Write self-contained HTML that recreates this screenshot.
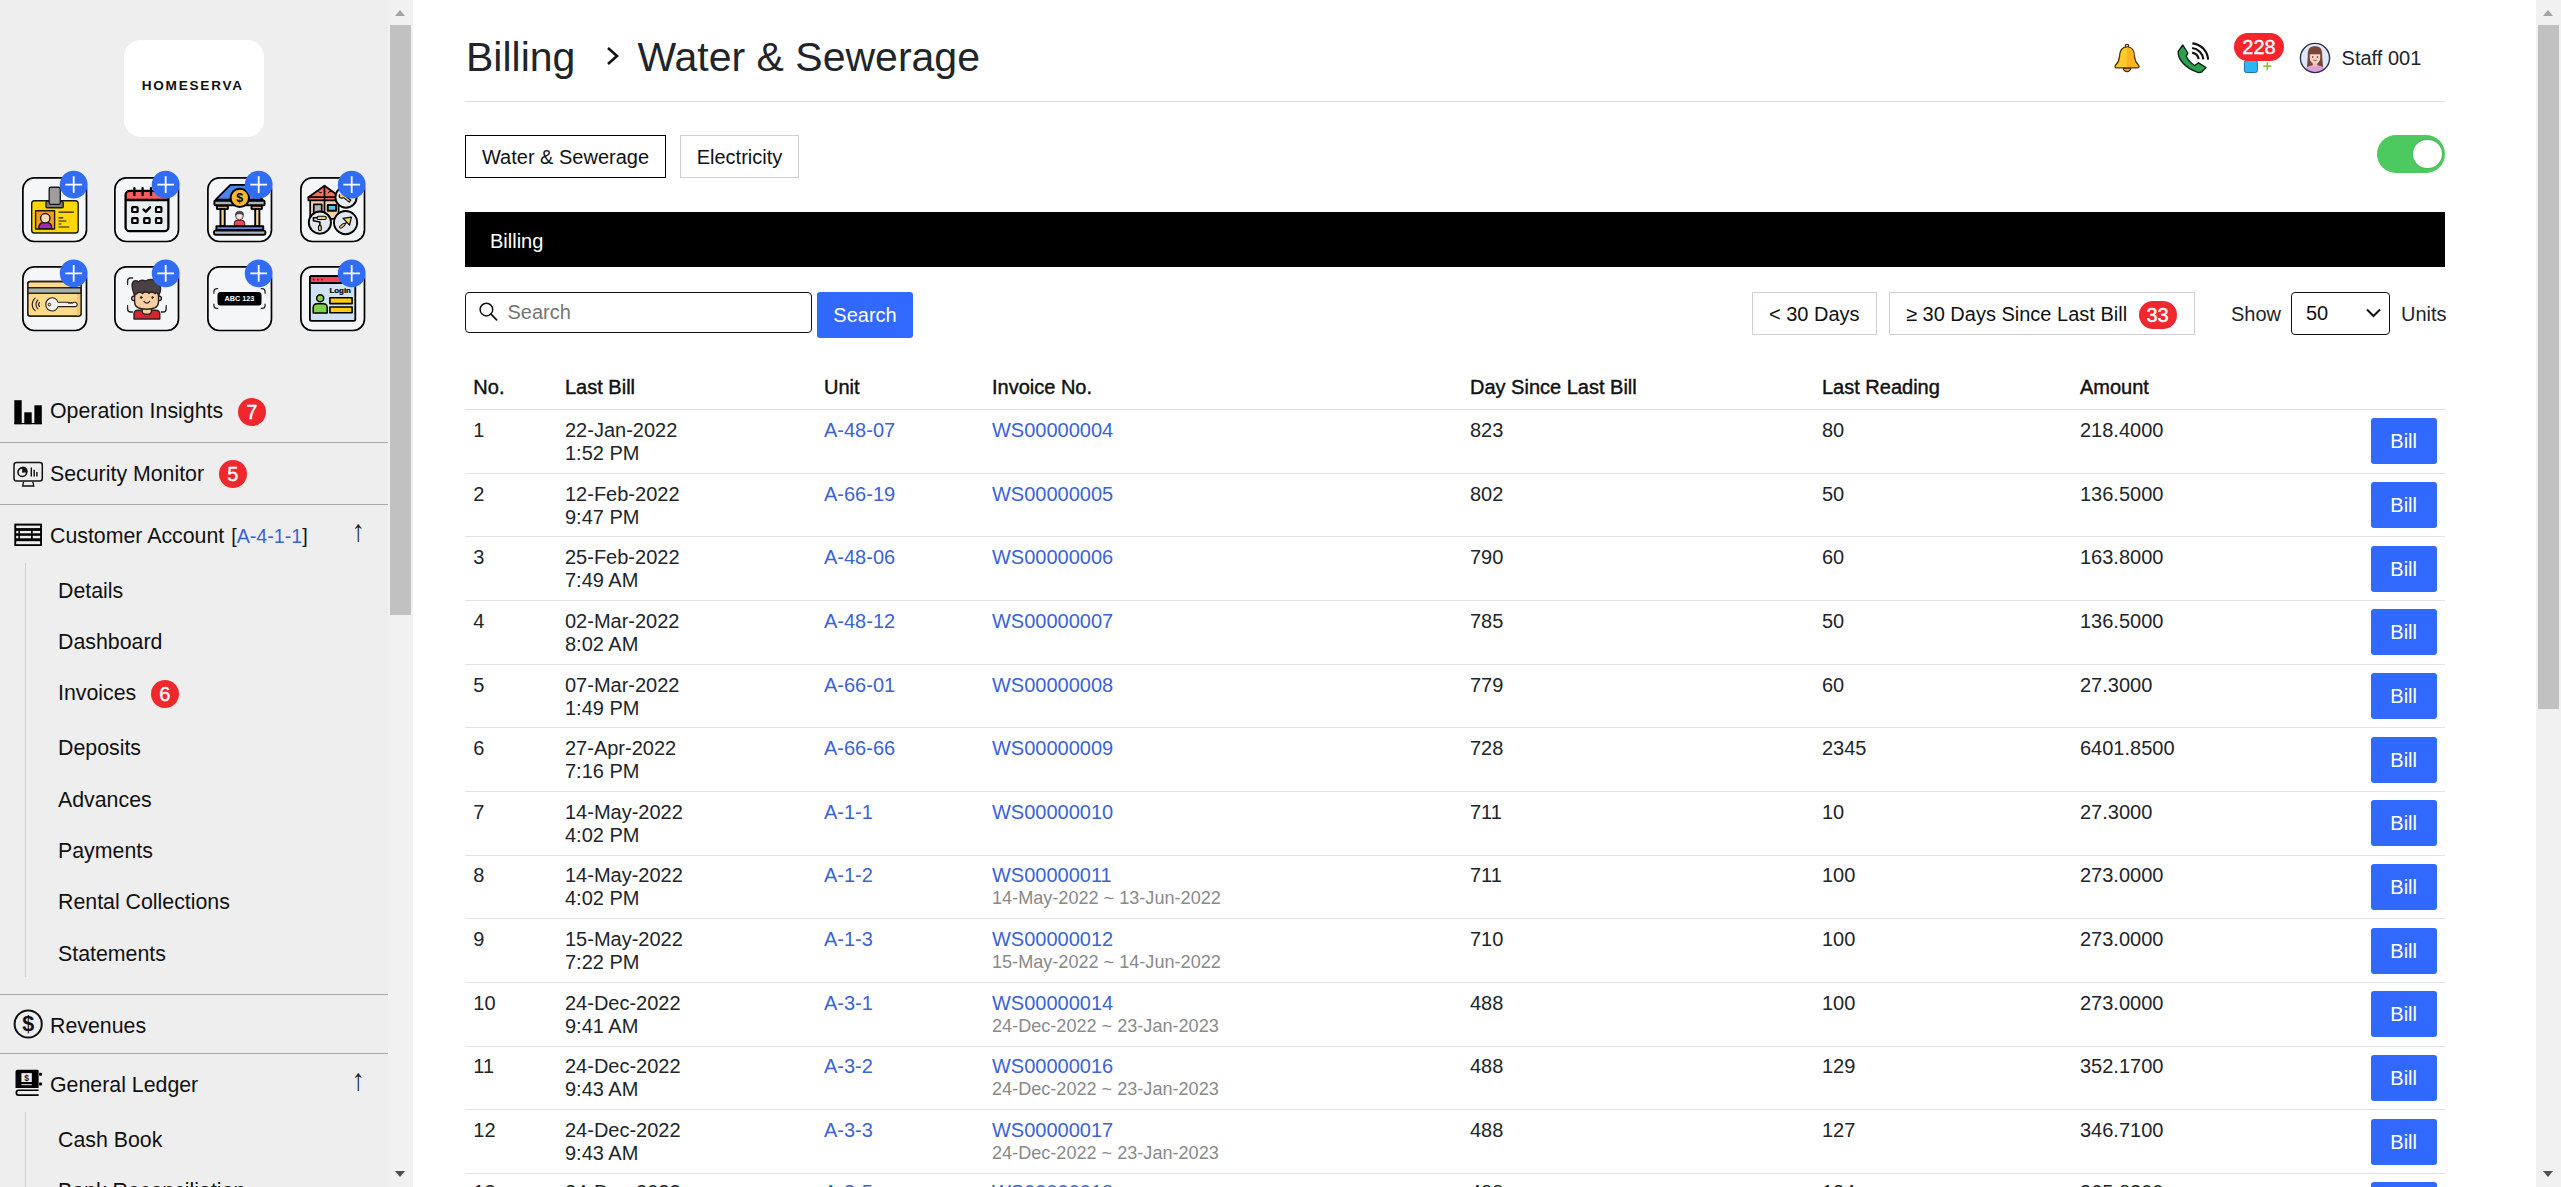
<!DOCTYPE html>
<html lang="en">
<head>
<meta charset="utf-8">
<title>Billing - Water &amp; Sewerage</title>
<style>
*{box-sizing:border-box;}
html,body{margin:0;padding:0;}
body{width:2561px;height:1187px;overflow:hidden;position:relative;background:#fff;
  font-family:"Liberation Sans",Arial,Helvetica,sans-serif;font-size:20px;line-height:23px;color:#212529;}
a{color:#3b63d6;text-decoration:none;}
/* ---------- sidebar ---------- */
#side{position:absolute;left:0;top:0;width:388px;height:1187px;background:#eeeeee;overflow:hidden;color:#111;font-size:21.33px;}
#logo{position:absolute;left:124px;top:40px;width:140px;height:97px;background:#fff;border-radius:17px;}
#logo svg{position:absolute;left:0;top:0;}
.tile{position:absolute;width:65.4px;height:65.4px;overflow:visible;}
.mi{position:absolute;left:0;width:388px;height:30px;}
.mi .t{position:absolute;left:50px;top:1.5px;white-space:nowrap;line-height:25px;}

.sep{position:absolute;left:0;width:388px;height:1px;background:#a9a9a9;}
.sub{position:absolute;left:58px;white-space:nowrap;line-height:25px;}
.vline{position:absolute;left:25px;width:1px;background:#cfcfcf;}
.badge{position:absolute;width:27.5px;height:27.5px;border-radius:14px;background:#f0282d;color:#fff;font-size:20px;line-height:28px;text-align:center;-webkit-text-stroke:0.4px #fff;}
.arr{position:absolute;left:351.5px;font-size:27px;line-height:22px;color:#222;transform:scaleY(1.13);transform-origin:50% 100%;}
/* ---------- scrollbars ---------- */
.sb{position:absolute;top:0;width:25px;height:1187px;background:#f1f1f1;}
.sb .th{position:absolute;left:2px;width:21px;top:25px;background:#c1c1c1;}
.sb .up{position:absolute;left:7px;top:10px;width:0;height:0;border-left:5.5px solid transparent;border-right:5.5px solid transparent;border-bottom:6px solid #a3a3a3;}
.sb .dn{position:absolute;left:7px;top:1171px;width:0;height:0;border-left:5.5px solid transparent;border-right:5.5px solid transparent;border-top:6px solid #505050;}
/* ---------- main ---------- */
#main{position:absolute;left:413px;top:0;width:2123px;height:1187px;overflow:hidden;}
#title{position:absolute;left:53px;top:34px;font-size:41px;line-height:46px;white-space:nowrap;color:#212529;}
#hr{position:absolute;left:52px;top:101px;width:1980px;height:1px;background:#dcdcdc;}
.tab{position:absolute;top:135px;height:43px;border:1.67px solid #d0d0d0;line-height:42px;text-align:center;color:#111;white-space:nowrap;background:#fff;}
#bar{position:absolute;left:52px;top:212px;width:1980px;height:55px;background:#000;color:#fff;line-height:58px;padding-left:25px;}
#search{position:absolute;left:52px;top:292px;width:347px;height:41px;border:1.67px solid #111;border-radius:4px;}
#search span{position:absolute;left:41.5px;top:8.3px;color:#757575;}
#sbtn{position:absolute;left:404px;top:292px;width:96px;height:46px;background:#3168fe;border-radius:3px;color:#fff;text-align:center;line-height:46px;}
.fbtn{position:absolute;top:292px;height:43px;border:1.67px solid #d0d0d0;line-height:42px;color:#111;white-space:nowrap;}
#tbl{position:absolute;left:52px;top:365.4px;width:1980px;border-collapse:collapse;table-layout:fixed;}
#tbl th{font-weight:normal;text-align:left;color:#111;-webkit-text-stroke:0.42px #111;padding:11px 8.33px 9.67px;border-bottom:1px solid #dcdfe2;line-height:23px;white-space:nowrap;}
#tbl td{padding:8.83px 8.33px 7.83px;border-bottom:1px solid #e0e2e5;vertical-align:top;line-height:23px;height:63.67px;white-space:nowrap;}
#tbl td small{display:block;font-size:18.1px;line-height:21px;color:#8a8a8a;margin-top:1px;}
.bill{display:block;width:66px;height:46px;background:#3168fe;color:#fff;border-radius:3px;text-align:center;line-height:46px;margin-top:-0.5px;}
#tbl tr:last-child td{padding-top:7.3px;}
#tbl tr:last-child .bill{margin-top:1px;}
</style>
</head>
<body>
<div id="side">
  <div id="logo"><svg width="140" height="97" viewBox="0 0 140 97"><text x="17.7" y="50.1" font-family="Liberation Sans, sans-serif" font-weight="bold" font-size="13.6" textLength="100.4" lengthAdjust="spacing" fill="#111">HOMESERVA</text></svg></div>
  <!--TILES_S-->
  <svg class="tile" style="left:22.2px;top:176.8px" viewBox="0 0 65.4 65.4"><rect x="0.9" y="0.9" width="63.6" height="63.6" rx="11.4" fill="#f5f6f8" stroke="#000" stroke-width="1.7"/><g stroke="#1a1a1a" stroke-width="1.4" stroke-linejoin="round">
<rect x="9.7" y="23.8" width="46.5" height="32.2" rx="2.8" fill="#ffd60a"/>
<rect x="24" y="24.4" width="17.2" height="6.3" rx="1.2" fill="#7c7c7c"/>
<rect x="27.2" y="10.2" width="11.1" height="17.2" rx="1.6" fill="#9d9d9d"/>
<rect x="13.6" y="33.8" width="19" height="18.2" fill="#ff9a1e"/>
<path d="M16.6 51.6 C16.6 47.2 19.4 45.2 23.3 45.2 C27.2 45.2 30 47.2 30 51.6 Z" fill="#a42bb5"/>
<circle cx="23.3" cy="41.2" r="4.7" fill="#fbdcb5"/>
</g>
<path d="M36.5 35.2 H51.9 M36.5 40.8 H41.2 M36.5 44 H44.4 M36.5 47 H39.4 M36.5 50 H47.3" stroke="#1a1a1a" stroke-width="1.2" fill="none"/><circle cx="51.7" cy="7.7" r="13.9" fill="#316cf4"/><path d="M43.3 7.7 H60.1 M51.7 -0.7 V16.1" stroke="#fff" stroke-width="1.8" fill="none"/></svg>
  <svg class="tile" style="left:114.0px;top:176.8px" viewBox="0 0 65.4 65.4"><rect x="0.9" y="0.9" width="63.6" height="63.6" rx="11.4" fill="#f5f6f8" stroke="#000" stroke-width="1.7"/><rect x="11.6" y="13.8" width="42.8" height="40.4" rx="4" fill="#e9eeee"/>
<path d="M11.6 23 V17.8 Q11.6 13.8 15.6 13.8 H50.4 Q54.4 13.8 54.4 17.8 V23 Z" fill="#f95c5c"/>
<g fill="none" stroke="#000" stroke-width="2.3" stroke-linecap="round" stroke-linejoin="round">
<rect x="11.6" y="13.8" width="42.8" height="40.4" rx="4"/>
<path d="M11.6 23 H54.4" stroke-linecap="butt"/>
<path d="M20.4 11.2 V18.2 M28.6 11.2 V18.2 M37 11.2 V18.2 M45.3 11.2 V18.2"/>
<g fill="#fff" stroke-width="2.2"><rect x="18.2" y="30.2" width="5.4" height="4.8" rx="0.6"/><rect x="42" y="30.2" width="5.4" height="4.8" rx="0.6"/><rect x="18.2" y="41.2" width="5.4" height="4.8" rx="0.6"/><rect x="30.2" y="41.2" width="5.4" height="4.8" rx="0.6"/><rect x="42" y="41.2" width="5.4" height="4.8" rx="0.6"/></g>
<path d="M29.6 32.6 L31.9 34.7 L36 30.4" stroke-width="2.4"/>
</g><circle cx="51.7" cy="7.7" r="13.9" fill="#316cf4"/><path d="M43.3 7.7 H60.1 M51.7 -0.7 V16.1" stroke="#fff" stroke-width="1.8" fill="none"/></svg>
  <svg class="tile" style="left:207.1px;top:176.8px" viewBox="0 0 65.4 65.4"><rect x="0.9" y="0.9" width="63.6" height="63.6" rx="11.4" fill="#f5f6f8" stroke="#000" stroke-width="1.7"/><g stroke="#000" stroke-width="1.9" stroke-linejoin="round">
<path d="M8.7 22.6 L23.4 7.9 H42.7 L55.6 22.6 Z" fill="#4a86e8"/>
<rect x="7.4" y="23.8" width="50.2" height="4.4" rx="0.8" fill="#aab6bb"/>
<rect x="9.9" y="28.9" width="11" height="3.2" rx="0.6" fill="#f5a83a"/>
<rect x="44.5" y="28.9" width="10.4" height="3.2" rx="0.6" fill="#f5a83a"/>
<rect x="13.5" y="32.1" width="4.2" height="16.8" fill="#f9d79b"/>
<rect x="48.2" y="32.1" width="4.2" height="16.8" fill="#f9d79b"/>
<path d="M27.2 48.9 V46.6 Q27.2 43.1 30.7 43.1 H34.3 Q37.8 43.1 37.8 46.6 V48.9 Z" fill="#e8475a" stroke-width="0.8"/>
<circle cx="32.5" cy="39" r="3.8" fill="#fde3da" stroke-width="0.9" stroke="#333"/>
<path d="M28.5 38.2 Q28.3 34.2 32.5 34.2 Q36.9 34.2 36.5 38.2 Q34.5 36.6 32.5 36.8 Q30.4 36.6 28.5 38.2 Z" fill="#444" stroke="#333" stroke-width="0.6"/>
<rect x="9.4" y="49.3" width="46.9" height="3.6" fill="#5c8fe0"/>
<rect x="7" y="53.6" width="51.4" height="4.1" rx="1.4" fill="#aab6bb"/>
<circle cx="32.8" cy="20.9" r="9.2" fill="#f7b733" stroke-width="2"/>
</g>
<text x="32.8" y="25.1" text-anchor="middle" font-family="Liberation Sans, sans-serif" font-weight="bold" font-size="12.4" fill="#000">$</text><circle cx="51.7" cy="7.7" r="13.9" fill="#316cf4"/><path d="M43.3 7.7 H60.1 M51.7 -0.7 V16.1" stroke="#fff" stroke-width="1.8" fill="none"/></svg>
  <svg class="tile" style="left:300.2px;top:176.8px" viewBox="0 0 65.4 65.4"><rect x="0.9" y="0.9" width="63.6" height="63.6" rx="11.4" fill="#f5f6f8" stroke="#000" stroke-width="1.7"/><g stroke="#000" stroke-width="1.7" stroke-linejoin="round" stroke-linecap="round">
<rect x="10.2" y="23" width="28.4" height="18.8" fill="#f5cfae"/>
<path d="M8.4 20.2 L24.5 8.7 L40.6 20.2 V23.4 H8.4 Z" fill="#f2705f"/>
<path d="M8.4 20.2 H40.6 M24.5 9 V41.5" fill="none"/>
<path d="M18.6 14.6 q1 1.6 2.8 1.2 M28.4 15.8 q0.4 -1.8 2.2 -1.6" fill="none" stroke-width="1"/>
<rect x="13.8" y="27.4" width="7.9" height="10" fill="#b0b8c4"/>
<rect x="27.8" y="28" width="8.2" height="5.8" fill="#4fc8f0" stroke-width="1.9"/>
<circle cx="46" cy="20.2" r="10.6" fill="#e8ebf2" stroke-width="1.9"/>
<path d="M39.4 17.6 q-1 2.6 1.6 3.4 q1.6 0.4 2.6 -0.4 l5.6 4.6 l1.6 -2 l-5.6 -4.4 q0.4 -1.4 -0.6 -2.6" fill="#f3d35b" stroke-width="1.1"/>
<circle cx="19.9" cy="45.6" r="11.1" fill="#e3e7ef" stroke-width="1.9"/>
<circle cx="45.6" cy="45.6" r="11.6" fill="#e3e7ef" stroke-width="1.9"/>
<rect x="17" y="39.2" width="9.2" height="3.3" rx="1.5" fill="#f3d35b" stroke-width="1.1"/>
<path d="M17 40.8 H13.4 V43.8 L19.9 45 V48.6" fill="none" stroke-width="1.5"/>
<rect x="18.5" y="48.4" width="2.8" height="5.2" rx="1.4" fill="#f3d35b" stroke-width="1.1"/>
<path d="M43.1 41.3 L51.4 40.1 L49.6 48.1 Z" fill="#f3d35b" stroke-width="1.2"/>
<path d="M46.2 45.8 L44 47.5" fill="none" stroke-width="1.4"/>
<path d="M43.8 47.7 L40.8 50" fill="none" stroke-width="3.4"/>
<path d="M43.8 47.7 L40.8 50" fill="none" stroke="#e8b96a" stroke-width="1.6"/>
</g><circle cx="51.7" cy="7.7" r="13.9" fill="#316cf4"/><path d="M43.3 7.7 H60.1 M51.7 -0.7 V16.1" stroke="#fff" stroke-width="1.8" fill="none"/></svg>
  <svg class="tile" style="left:22.2px;top:266.0px" viewBox="0 0 65.4 65.4"><rect x="0.9" y="0.9" width="63.6" height="63.6" rx="11.4" fill="#f5f6f8" stroke="#000" stroke-width="1.7"/><g stroke="#2a2118" stroke-width="1.4" stroke-linejoin="round">
<rect x="5.7" y="15.5" width="53.4" height="34.7" rx="2.6" fill="#fdd98a"/>
<path d="M55 15.6 H56.5 Q59.1 15.6 59.1 18.1 V47.6 Q59.1 50.1 56.5 50.1 H55 Z" fill="#f0c674" stroke="none"/>
<rect x="5.7" y="21.8" width="53.4" height="5.4" fill="#a9b1b1"/>
<rect x="5.7" y="15.5" width="53.4" height="34.7" rx="2.6" fill="none"/>
<path d="M36 36.3 L46 36.3 l0.8 0.9 l0.9 -0.7 l0.9 0.7 l0.9 -0.7 l0.9 0.7 l0.9 -0.9 H53.5 Q55.2 37.2 55.2 38.6 Q55.2 40.6 53.5 40.6 H36 C35 43 33 45 30.3 45 C26.5 45 23.8 42 23.8 38.4 C23.8 34.8 26.5 31.8 30.3 31.8 C33 31.8 35 33.8 36 36.3 Z" fill="#eef0f2" stroke-width="1.1"/>
<circle cx="27.4" cy="38.6" r="1.3" fill="#fdd98a" stroke-width="1"/>
<path d="M13.1 32.2 A8.1 8.1 0 0 0 13.1 44.6 M15.9 34.0 A6 6 0 0 0 15.9 42.8 M17.5 36.3 A3 3 0 0 0 17.5 40.5" fill="none" stroke-width="1.1" stroke-linecap="round"/>
</g><circle cx="51.7" cy="7.4" r="13.9" fill="#316cf4"/><path d="M43.3 7.4 H60.1 M51.7 -1.0 V15.8" stroke="#fff" stroke-width="1.8" fill="none"/></svg>
  <svg class="tile" style="left:114.0px;top:266.0px" viewBox="0 0 65.4 65.4"><rect x="0.9" y="0.9" width="63.6" height="63.6" rx="11.4" fill="#f5f6f8" stroke="#000" stroke-width="1.7"/><g stroke="#2b2326" stroke-width="1.4" stroke-linejoin="round" stroke-linecap="round">
<path d="M13.6 18.6 V15 Q13.6 12 16.6 12 H18.6 M13.6 39.6 V43 Q13.6 46 16.6 46 H18.6 M52.2 39.6 V43 Q52.2 46 49.2 46 H47.2" fill="none" stroke-width="1.3"/>
<circle cx="19.8" cy="32.4" r="2.1" fill="#f7cfa1"/><circle cx="45.3" cy="32.4" r="2.1" fill="#f7cfa1"/>
<path d="M20 53 V48.2 Q20 44.2 24 44.2 H41.8 Q45.8 44.2 45.8 48.2 V53 Z" fill="#d9232e"/>
<path d="M28.2 42 V45 Q28.2 48.3 32.8 48.3 Q37.5 48.3 37.5 45 V42 Z" fill="#f7cfa1"/>
<path d="M20.6 26 H44.5 V36 Q44.5 43.2 32.5 43.2 Q20.6 43.2 20.6 36 Z" fill="#f7cfa1"/>
<path d="M20.6 30 C19 24 16.8 20 18.6 16.6 C20 14 23 14.6 24.4 16 C26.5 13.6 30 14.4 31.6 15 C35 12.6 42 13 44.6 17.4 C47.4 20 47 25 44.6 30 C44.4 27 43 26 41 27.6 C39 25.6 36.6 25.4 35 27.4 C33 25 30 25.2 28.6 27.6 C26.4 25.4 23.4 26 22.6 28 C21.4 27.6 20.8 28.6 20.6 30 Z" fill="#4a4144"/>
<circle cx="27.2" cy="31.5" r="0.9" fill="#2b2326" stroke-width="0.8"/><circle cx="38.6" cy="31.5" r="0.9" fill="#2b2326" stroke-width="0.8"/>
<path d="M30 35.4 Q32.8 39 35.7 35.4" fill="none" stroke-width="1.3"/>
</g><circle cx="51.7" cy="7.4" r="13.9" fill="#316cf4"/><path d="M43.3 7.4 H60.1 M51.7 -1.0 V15.8" stroke="#fff" stroke-width="1.8" fill="none"/></svg>
  <svg class="tile" style="left:207.1px;top:266.0px" viewBox="0 0 65.4 65.4"><rect x="0.9" y="0.9" width="63.6" height="63.6" rx="11.4" fill="#f5f6f8" stroke="#000" stroke-width="1.7"/><rect x="10.5" y="26" width="44" height="13.5" rx="3" fill="#000"/>
<text x="32.4" y="35.3" text-anchor="middle" font-family="Liberation Sans, sans-serif" font-weight="bold" font-size="7.2" fill="#fff" textLength="30" lengthAdjust="spacingAndGlyphs" xml:space="preserve">ABC 123</text>
<path d="M6.9 27.2 V25.7 Q6.9 22.7 9.9 22.7 H10.7 M58.1 27.2 V25.7 Q58.1 22.7 55.1 22.7 H54.3 M6.9 38.2 V39.5 Q6.9 42.4 9.9 42.4 H10.7 M58.1 38.2 V39.5 Q58.1 42.4 55.1 42.4 H54.3" fill="none" stroke="#222" stroke-width="1.2" stroke-linecap="round"/><circle cx="51.7" cy="7.4" r="13.9" fill="#316cf4"/><path d="M43.3 7.4 H60.1 M51.7 -1.0 V15.8" stroke="#fff" stroke-width="1.8" fill="none"/></svg>
  <svg class="tile" style="left:300.2px;top:266.0px" viewBox="0 0 65.4 65.4"><rect x="0.9" y="0.9" width="63.6" height="63.6" rx="11.4" fill="#f5f6f8" stroke="#000" stroke-width="1.7"/><g stroke="#000" stroke-width="1.8" stroke-linejoin="round">
<rect x="9.9" y="10.2" width="45.4" height="44.7" rx="1.6" fill="#cfe2f3"/>
<path d="M9.9 17 V11.8 Q9.9 10.2 11.5 10.2 H53.7 Q55.3 10.2 55.3 11.8 V17 Z" fill="#f4425f"/>
<rect x="29.9" y="31.8" width="22.2" height="5.8" fill="#ffcc14" stroke-width="1.6"/>
<rect x="29.9" y="41" width="22.2" height="5.8" fill="#ffcc14" stroke-width="1.6"/>
<path d="M13.2 47 V41.8 Q13.2 37.8 17.2 37.8 H23.2 Q27.2 37.8 27.2 41.8 V47 Z" fill="#7ed348" stroke-width="1.5"/>
<circle cx="20.2" cy="32.3" r="3.5" fill="#7ed348" stroke-width="1.5"/>
</g>
<circle cx="13.8" cy="13.5" r="0.9" fill="#7a0f22"/><circle cx="17.9" cy="13.5" r="0.9" fill="#7a0f22"/><circle cx="22" cy="13.5" r="0.9" fill="#7a0f22"/>
<text x="40.2" y="26.6" text-anchor="middle" font-family="Liberation Sans, sans-serif" font-weight="bold" font-size="7.8" fill="#000" stroke="#000" stroke-width="0.25" textLength="21.5" lengthAdjust="spacingAndGlyphs">Login</text><circle cx="51.7" cy="7.4" r="13.9" fill="#316cf4"/><path d="M43.3 7.4 H60.1 M51.7 -1.0 V15.8" stroke="#fff" stroke-width="1.8" fill="none"/></svg>
  <!--TILES_E-->
  <svg width="60" height="720" viewBox="0 390 60 720" style="position:absolute;left:0;top:390px">
    <g fill="#000">
      <rect x="14.3" y="400.2" width="7.4" height="24"/><rect x="24.3" y="412.3" width="7.4" height="11.9"/><rect x="34.4" y="405.3" width="7.4" height="18.9"/><rect x="14.3" y="423" width="27.5" height="1.2"/>
    </g>
    <g fill="none" stroke="#111" stroke-width="1.5">
      <rect x="14" y="462.4" width="28.3" height="18.6" rx="2.5"/>
      <path d="M23.6 481.6 L22.6 486 H33.8 L32.8 481.6" stroke-width="1.3"/>
      <circle cx="22.3" cy="472.2" r="4.3" stroke-width="1.6"/>
      <path d="M22.8 472 V467.2 A4.3 4.3 0 0 1 27.1 471.6 Z" stroke-width="1.2" fill="#111"/>
      <path d="M31.3 467.6 V476.4 M34.2 469.8 V476.4 M36.9 472 V476.4" stroke-width="1.4"/>
    </g>
    <rect x="14.3" y="523.6" width="27.7" height="22.4" fill="#000"/>
    <g fill="#eeeeee">
      <rect x="16.2" y="525.6" width="23.9" height="2.5"/>
      <rect x="16.2" y="530.9" width="2.2" height="2.4"/><rect x="19.9" y="530.9" width="11.1" height="2.4"/><rect x="32.7" y="530.9" width="7.4" height="2.4"/>
      <rect x="16.2" y="535.8" width="2.2" height="2.5"/><rect x="19.9" y="535.8" width="11.1" height="2.5"/><rect x="32.7" y="535.8" width="7.4" height="2.5"/>
      <rect x="16.2" y="541.2" width="23.9" height="3"/>
    </g>
    <circle cx="28.2" cy="1024" r="13.6" fill="none" stroke="#111" stroke-width="2"/>
    <text x="28.2" y="1031.3" text-anchor="middle" font-family="Liberation Sans, sans-serif" font-weight="bold" font-size="21.5" fill="#111">$</text>
    <path d="M17.5 1069.7 H37.4 Q38.6 1069.7 38.6 1071 V1087.9 H15.5 V1071.7 Q15.5 1069.7 17.5 1069.7 Z" fill="#000"/>
    <rect x="21.4" y="1073.1" width="10.4" height="8.9" fill="#eeeeee"/>
    <text x="26.6" y="1081" text-anchor="middle" font-family="Liberation Sans, sans-serif" font-weight="bold" font-size="8.5" fill="#111">$</text>
    <rect x="21.4" y="1084.2" width="10.4" height="1" fill="#eeeeee"/>
    <rect x="39" y="1072.8" width="3" height="3" rx="0.8" fill="#000"/><rect x="39" y="1082.6" width="3" height="3" rx="0.8" fill="#000"/>
    <path d="M38.6 1089.4 H18.5 Q15.5 1089.4 15.5 1092.7 Q15.5 1096 18.5 1096 H38.6 V1094.3 H18.5 Q17.3 1094.3 17.3 1092.7 Q17.3 1091.1 18.5 1091.1 H38.6 Z" fill="#000"/>
  </svg>
  <div class="mi" style="top:397px"><span class="t">Operation Insights</span><span class="badge" style="left:238px;top:1px">7</span></div>
  <div class="sep" style="top:442px"></div>
  <div class="mi" style="top:460px"><span class="t">Security Monitor</span><span class="badge" style="left:219px;top:0px">5</span></div>
  <div class="sep" style="top:504px"></div>
  <div class="mi" style="top:522px"><span class="t">Customer Account <span style="font-size:19.7px;margin-left:1px">[<a>A-4-1-1</a>]</span></span><span class="arr" style="top:-1px">&#8593;</span></div>
  <div class="vline" style="top:563px;height:414px"></div>
  <div class="sub" style="top:579px">Details</div>
  <div class="sub" style="top:630px">Dashboard</div>
  <div class="sub" style="top:681px">Invoices<span class="badge" style="left:93px;top:-1px">6</span></div>
  <div class="sub" style="top:736px">Deposits</div>
  <div class="sub" style="top:788px">Advances</div>
  <div class="sub" style="top:839px">Payments</div>
  <div class="sub" style="top:890px">Rental Collections</div>
  <div class="sub" style="top:942px">Statements</div>
  <div class="sep" style="top:994px"></div>
  <div class="mi" style="top:1012px"><span class="t">Revenues</span></div>
  <div class="sep" style="top:1053px"></div>
  <div class="mi" style="top:1071px"><span class="t">General Ledger</span><span class="arr" style="top:-1px">&#8593;</span></div>
  <div class="vline" style="top:1112px;height:80px"></div>
  <div class="sub" style="top:1128px">Cash Book</div>
  <div class="sub" style="top:1179px">Bank Reconciliation</div>
</div>
<div class="sb" style="left:388px"><div class="up"></div><div class="th" style="height:590px"></div><div class="dn"></div></div>
<div id="main">
  <div id="title">Billing<svg width="20" height="28" viewBox="0 0 20 28" style="margin:0 14px 0 28px;vertical-align:1px"><path d="M5 6 L14 14 L5 22" fill="none" stroke="#111" stroke-width="2.6"/></svg>Water &amp; Sewerage</div>
  <svg id="topic" width="240" height="56" viewBox="2103 28 240 56" style="position:absolute;left:1690px;top:28px">
    <g stroke="#4a3205" stroke-width="1.3" stroke-linejoin="round">
      <path d="M2123.3 68 a3.7 3.7 0 0 0 7.4 0 z" fill="#ff9d17"/>
      <circle cx="2127" cy="46" r="1.7" fill="#fff"/>
      <path d="M2127 46.8 C2120.5 46.8 2119.6 52 2119.4 57 C2119.2 61.5 2117.5 63.3 2115.5 65.3 C2114.5 66.4 2115 67.8 2116.4 67.8 L2137.6 67.8 C2139 67.8 2139.5 66.4 2138.5 65.3 C2136.5 63.3 2134.8 61.5 2134.6 57 C2134.4 52 2133.5 46.8 2127 46.8 Z" fill="#ffc928"/>
    </g>
    <path d="M2127 47.6 C2133 47.6 2133.7 52.5 2133.9 57 C2134.1 61.8 2135.9 63.8 2137.9 65.8 C2138.5 66.5 2138.3 67.1 2137.5 67.1 L2127 67.1 Z" fill="#ffb41f"/>
    <path d="M2182.8 45 L2178.2 51.5 C2177.5 58 2184 68 2198.5 72.6 L2201.6 72 L2206 67.5 L2198.5 62.8 L2194.7 65.5 C2191 63.5 2188 60 2186.2 56.3 L2187.8 53 Z" fill="#2f9e4f" stroke="#07240f" stroke-width="1.4" stroke-linejoin="round"/>
    <path d="M2192.3 43.3 A17.3 17.3 0 0 1 2208.1 59.6 M2192.1 48.0 A12.6 12.6 0 0 1 2203.4 59.4 M2192.2 52.6 A8.0 8.0 0 0 1 2198.7 59.1" fill="none" stroke="#111" stroke-width="2.2"/>
    <rect x="2244.4" y="60.5" width="13" height="12" rx="2" fill="#2bb5f5" stroke="#1a6fc4" stroke-width="1"/>
    <path d="M2263.3 66.2 H2271.3 M2267.3 62.2 V70.2" stroke="#8bc34a" stroke-width="1.8"/>
    <rect x="2234" y="33" width="50" height="28" rx="14" fill="#f5252b"/>
    <text x="2259" y="54.2" text-anchor="middle" font-family="Liberation Sans, sans-serif" font-size="20" fill="#fff" stroke="#fff" stroke-width="0.35">228</text>
    <clipPath id="avc"><circle cx="2315" cy="58" r="14.3"/></clipPath>
    <circle cx="2315" cy="58" r="14.6" fill="#dde9f8"/>
    <g clip-path="url(#avc)">
      <path d="M2306.5 74 L2307.8 56 C2307.5 48.5 2310 46.3 2315 46.3 C2320 46.3 2322.5 48.5 2322.2 56 L2323.5 74 Z" fill="#7a4637"/>
      <path d="M2304 74 C2304 68 2308 65.2 2315 65.2 C2322 65.2 2326 68 2326 74 Z" fill="#dba2de"/>
      <rect x="2312.7" y="61" width="4.6" height="5.5" fill="#eebfb0"/>
      <path d="M2309.8 53.5 L2320.2 53.5 L2320.2 58 C2320.2 61.5 2318 63.6 2315 63.6 C2312 63.6 2309.8 61.5 2309.8 58 Z" fill="#f7d3c6"/>
      <path d="M2308.5 54.3 C2308.5 50.5 2311 49 2315 49 C2319 49 2321.5 50.5 2321.5 54.3 Z" fill="#7a4637"/>
      <circle cx="2312.6" cy="57" r="0.8" fill="#3a2220"/><circle cx="2317.4" cy="57" r="0.8" fill="#3a2220"/>
      <path d="M2313.2 60 Q2315 61.8 2316.8 60" fill="#fff" stroke="#3a2220" stroke-width="0.7"/>
    </g>
    <circle cx="2315" cy="58" r="14.6" fill="none" stroke="#2b2f47" stroke-width="1.4"/>
  </svg>
  <div style="position:absolute;left:1928.6px;top:46.6px;font-size:20px;line-height:23px;color:#212529;white-space:nowrap">Staff 001</div>
  <div id="hr"></div>
  <div class="tab" style="left:52px;width:201px;border-color:#000">Water &amp; Sewerage</div>
  <div class="tab" style="left:267px;width:119px">Electricity</div>
  <div id="toggle" style="position:absolute;left:1964px;top:135px;width:68px;height:38px;border-radius:19px;background:#4cc95f"><i style="position:absolute;left:36px;top:4.5px;width:28.5px;height:28.5px;border-radius:50%;background:#fff;box-shadow:0 0 1.5px rgba(0,0,0,.25)"></i></div>
  <div id="bar">Billing</div>
  <div id="search"><svg width="24" height="24" viewBox="0 0 24 24" style="position:absolute;left:11px;top:7px"><circle cx="9.4" cy="9.6" r="6.3" fill="none" stroke="#111" stroke-width="1.5"/><path d="M14 14.2 L19.6 19.8" stroke="#111" stroke-width="1.7" stroke-linecap="round"/></svg><span>Search</span></div>
  <div id="sbtn">Search</div>
  <div class="fbtn" style="left:1339px;width:125px;padding-left:16px">&lt; 30 Days</div>
  <div class="fbtn" style="left:1476px;width:306px;padding-left:16px">&#8805; 30 Days Since Last Bill<span style="position:absolute;left:248.5px;top:7.8px;width:38px;height:28px;border-radius:14px;background:#f0282d;color:#fff;line-height:28px;text-align:center;font-size:20px;-webkit-text-stroke:0.4px #fff">33</span></div>
  <div style="position:absolute;left:1818px;top:303px;line-height:23px">Show</div>
  <div id="sel" style="position:absolute;left:1878px;top:292px;width:99px;height:43px;border:1.67px solid #111;border-radius:4px;line-height:41px;padding-left:14px;color:#111">50<svg width="20" height="12" viewBox="0 0 20 12" style="position:absolute;left:72px;top:14px"><path d="M3 2.5 L9.5 9 L16 2.5" fill="none" stroke="#111" stroke-width="2"/></svg></div>
  <div style="position:absolute;left:1988px;top:303px;line-height:23px">Units</div>
  <table id="tbl">
    <colgroup><col style="width:91.67px"><col style="width:259px"><col style="width:168px"><col style="width:478px"><col style="width:352px"><col style="width:258px"><col style="width:290.67px"><col style="width:82.67px"></colgroup>
    <tr><th>No.</th><th>Last Bill</th><th>Unit</th><th>Invoice No.</th><th>Day Since Last Bill</th><th>Last Reading</th><th>Amount</th><th></th></tr>
    <tr><td>1</td><td>22-Jan-2022<br>1:52 PM</td><td><a>A-48-07</a></td><td><a>WS00000004</a></td><td>823</td><td>80</td><td>218.4000</td><td><span class="bill">Bill</span></td></tr>
    <tr><td>2</td><td>12-Feb-2022<br>9:47 PM</td><td><a>A-66-19</a></td><td><a>WS00000005</a></td><td>802</td><td>50</td><td>136.5000</td><td><span class="bill">Bill</span></td></tr>
    <tr><td>3</td><td>25-Feb-2022<br>7:49 AM</td><td><a>A-48-06</a></td><td><a>WS00000006</a></td><td>790</td><td>60</td><td>163.8000</td><td><span class="bill">Bill</span></td></tr>
    <tr><td>4</td><td>02-Mar-2022<br>8:02 AM</td><td><a>A-48-12</a></td><td><a>WS00000007</a></td><td>785</td><td>50</td><td>136.5000</td><td><span class="bill">Bill</span></td></tr>
    <tr><td>5</td><td>07-Mar-2022<br>1:49 PM</td><td><a>A-66-01</a></td><td><a>WS00000008</a></td><td>779</td><td>60</td><td>27.3000</td><td><span class="bill">Bill</span></td></tr>
    <tr><td>6</td><td>27-Apr-2022<br>7:16 PM</td><td><a>A-66-66</a></td><td><a>WS00000009</a></td><td>728</td><td>2345</td><td>6401.8500</td><td><span class="bill">Bill</span></td></tr>
    <tr><td>7</td><td>14-May-2022<br>4:02 PM</td><td><a>A-1-1</a></td><td><a>WS00000010</a></td><td>711</td><td>10</td><td>27.3000</td><td><span class="bill">Bill</span></td></tr>
    <tr><td>8</td><td>14-May-2022<br>4:02 PM</td><td><a>A-1-2</a></td><td><a>WS00000011</a><small>14-May-2022 ~ 13-Jun-2022</small></td><td>711</td><td>100</td><td>273.0000</td><td><span class="bill">Bill</span></td></tr>
    <tr><td>9</td><td>15-May-2022<br>7:22 PM</td><td><a>A-1-3</a></td><td><a>WS00000012</a><small>15-May-2022 ~ 14-Jun-2022</small></td><td>710</td><td>100</td><td>273.0000</td><td><span class="bill">Bill</span></td></tr>
    <tr><td>10</td><td>24-Dec-2022<br>9:41 AM</td><td><a>A-3-1</a></td><td><a>WS00000014</a><small>24-Dec-2022 ~ 23-Jan-2023</small></td><td>488</td><td>100</td><td>273.0000</td><td><span class="bill">Bill</span></td></tr>
    <tr><td>11</td><td>24-Dec-2022<br>9:43 AM</td><td><a>A-3-2</a></td><td><a>WS00000016</a><small>24-Dec-2022 ~ 23-Jan-2023</small></td><td>488</td><td>129</td><td>352.1700</td><td><span class="bill">Bill</span></td></tr>
    <tr><td>12</td><td>24-Dec-2022<br>9:43 AM</td><td><a>A-3-3</a></td><td><a>WS00000017</a><small>24-Dec-2022 ~ 23-Jan-2023</small></td><td>488</td><td>127</td><td>346.7100</td><td><span class="bill">Bill</span></td></tr>
    <tr><td>13</td><td>24-Dec-2022<br>9:44 AM</td><td><a>A-3-5</a></td><td><a>WS00000018</a><small>24-Dec-2022 ~ 23-Jan-2023</small></td><td>488</td><td>134</td><td>365.8200</td><td><span class="bill">Bill</span></td></tr>
  </table>
</div>
<div class="sb" style="left:2536px"><div class="up"></div><div class="th" style="height:684px"></div><div class="dn"></div></div>
</body>
</html>
